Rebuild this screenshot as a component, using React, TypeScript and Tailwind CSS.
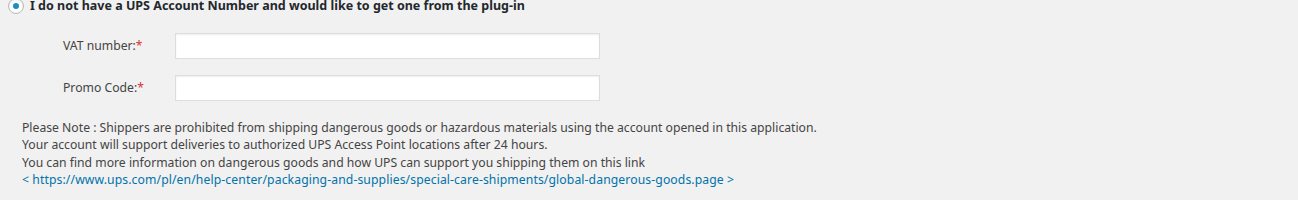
export default function App() {
  return (
    <div className="w-[1298px] h-[200px] overflow-hidden bg-[#f1f1f1] text-[12.2px] text-[#444] [font-family:'Noto_Sans',sans-serif]">
      <div className="-mt-[3px] pl-[8px] flex items-center gap-[6px] h-[18px]">
        <span className="w-[16px] h-[16px] rounded-full border border-[#b4b9be] bg-white shadow-[inset_0_1px_2px_rgba(0,0,0,0.1)] flex items-center justify-center">
          <span className="w-[6px] h-[6px] rounded-full bg-[#1e8cbe]" />
        </span>
        <span className="font-bold text-[12.5px] text-[#23282d]">
          I do not have a UPS Account Number and would like to get one from the plug-in
        </span>
      </div>

      <div className="mt-[18px] flex flex-col gap-[16px]">
        <div className="flex items-center">
          <label className="w-[175px] pl-[63px]">
            VAT number:<span className="text-[#dc3232]">*</span>
          </label>
          <input className="w-[425px] h-[26px] bg-white border border-[#ddd] shadow-[inset_0_1px_2px_rgba(0,0,0,0.07)] outline-none px-2" />
        </div>
        <div className="flex items-center">
          <label className="w-[175px] pl-[63px]">
            Promo Code:<span className="text-[#dc3232]">*</span>
          </label>
          <input className="w-[425px] h-[26px] bg-white border border-[#ddd] shadow-[inset_0_1px_2px_rgba(0,0,0,0.07)] outline-none px-2" />
        </div>
      </div>

      <div className="mt-[18px] pl-[22px] leading-[17.3px]">
        <p>Please Note : Shippers are prohibited from shipping dangerous goods or hazardous materials using the account opened in this application.</p>
        <p>Your account will support deliveries to authorized UPS Access Point locations after 24 hours.</p>
        <p>You can find more information on dangerous goods and how UPS can support you shipping them on this link</p>
        <a className="text-[#0073aa] tracking-[0.1px]" href="#">
          &lt; https://www.ups.com/pl/en/help-center/packaging-and-supplies/special-care-shipments/global-dangerous-goods.page &gt;
        </a>
      </div>
    </div>
  );
}
